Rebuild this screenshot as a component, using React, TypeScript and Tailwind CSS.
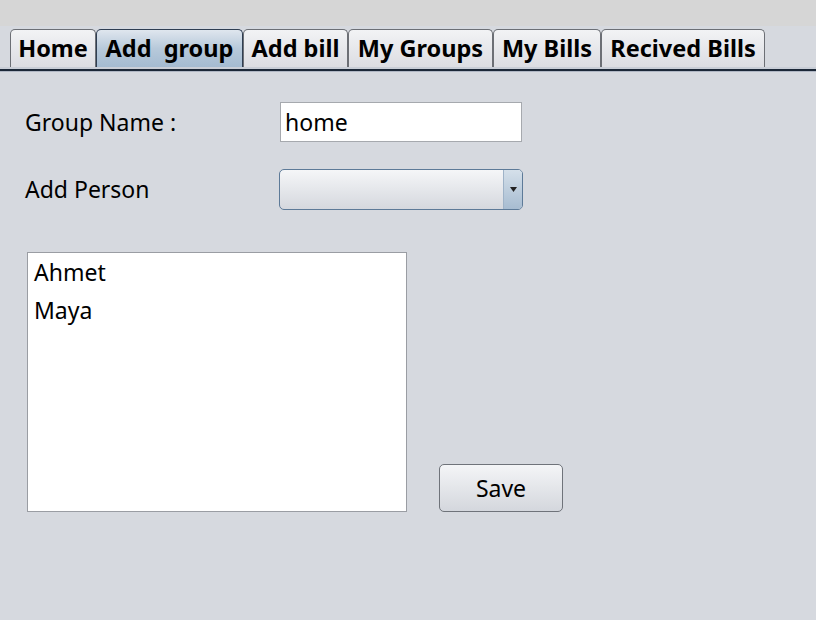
import React from "react";

const tabs = ["Home", "Add  group", "Add bill", "My Groups", "My Bills", "Recived Bills"];
const widths = [86, 147, 105, 145, 108, 164];

export default function App() {
  return (
    <div
      className="w-[816px] h-[620px] bg-[#d6d9df] flex flex-col overflow-hidden text-black"
      style={{ fontFamily: '"Noto Sans", "Open Sans", sans-serif' }}
    >
      <div className="h-[26px] bg-[#d6d6d6] shrink-0" />
      <div className="flex pl-[10px] pt-[3px] h-[41px] shrink-0">
        {tabs.map((t, i) => {
          const sel = i === 1;
          return (
            <div
              key={t}
              style={{ width: widths[i] }}
              className={
                "h-[38px] flex items-center justify-center border border-b-0 rounded-t-[5px] text-[23.5px] font-bold whitespace-pre leading-none " +
                (sel
                  ? "bg-gradient-to-b from-[#dfe6ee] via-[#b7c9da] to-[#a4bbd1] border-[#2f3e52]"
                  : "bg-gradient-to-b from-[#f2f3f5] to-[#dcdde2] border-[#6c6f75]")
              }
            >
              {t}
            </div>
          );
        })}
      </div>
      <div className="h-[2px] bg-[#c9ced7] shrink-0" />
      <div className="h-[2px] bg-[#1c2838] shrink-0" />
      <div className="h-[1px] bg-[#b0b7c4] shrink-0" />
      <div className="flex flex-col pl-[25px] pt-[30px]">
        <div className="flex items-center h-[40px]">
          <div className="w-[255px] text-[23px]">Group Name :</div>
          <div className="w-[242px] h-[40px] bg-white border border-[#a6a9ae] flex items-center pl-[4px] text-[23px]">
            home
          </div>
        </div>
        <div className="flex items-center h-[41px] mt-[27px]">
          <div className="w-[254px] text-[23px]">Add Person</div>
          <div className="w-[244px] h-[41px] rounded-[5px] border border-[#5d7a98] bg-gradient-to-b from-[#f5f6f8] to-[#d5d8de] flex overflow-hidden">
            <div className="flex-1" />
            <div className="w-[19px] border-l border-[#9fb3c8] bg-gradient-to-b from-[#d5e0ea] to-[#a7bcd1] flex items-center justify-center">
              <svg width="7" height="5" viewBox="0 0 7 5">
                <polygon points="0,0 7,0 3.5,5" fill="#222" />
              </svg>
            </div>
          </div>
        </div>
        <div className="flex items-end mt-[42px] pl-[2px]">
          <div className="w-[380px] h-[260px] bg-white border border-[#9a9da3] pl-[6px] pt-0 text-[23px] leading-[38px]">
            <div>Ahmet</div>
            <div>Maya</div>
          </div>
          <div className="ml-[32px] w-[124px] h-[48px] rounded-[5px] border border-[#6f737a] bg-gradient-to-b from-[#f4f5f7] to-[#d4d7dd] flex items-center justify-center text-[23px]">
            Save
          </div>
        </div>
      </div>
    </div>
  );
}
